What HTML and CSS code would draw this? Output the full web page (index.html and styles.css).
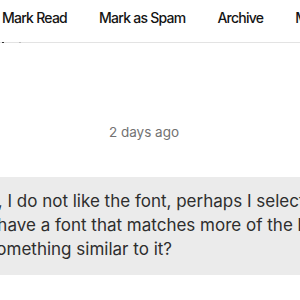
FILE: index.html
```html
<!DOCTYPE html>
<html>
<head>
<meta charset="utf-8">
<link rel="stylesheet" href="styles.css">
</head>
<body>
<nav class="toolbar">
  <span class="action">Mark Read</span>
  <span class="action">Mark as Spam</span>
  <span class="action">Archive</span>
  <span class="action">Move</span>
</nav>
<div class="residue"><span class="dot dark"></span><span class="dot light"></span></div>
<div class="timestamp">2 days ago</div>
<div class="bubble">
  <div class="line l1">Hi, I do not like the font, perhaps I selected the wrong one.</div>
  <div class="line l2">to have a font that matches more of the logo</div>
  <div class="line l3">or something similar to it?</div>
</div>
</body>
</html>
```
FILE: styles.css
```css
html, body {
  margin: 0;
  padding: 0;
  background: #ffffff;
  overflow: hidden;
}
body {
  width: 300px;
  height: 300px;
  font-family: "Inter", "Liberation Sans", sans-serif;
  color: #2b2b2b;
}
.toolbar {
  display: flex;
  gap: 32px;
  box-sizing: border-box;
  height: 43px;
  padding: 8px 0 0 2px;
  border-bottom: 1px solid #e3e3e3;
  white-space: nowrap;
  overflow: hidden;
}
.action {
  font-size: 14px;
  font-weight: 500;
  letter-spacing: -0.75px;
  line-height: 20px;
  color: #141414;
  flex: none;
}
.residue {
  display: flex;
  height: 2px;
  margin-top: -1px;
}
.dot {
  height: 1px;
  width: 2px;
}
.dark {
  background: #333;
  margin-left: 2px;
}
.light {
  background: #bbb;
  margin-left: 15px;
}
.timestamp {
  margin-top: 80px;
  padding-right: 12px;
  text-align: center;
  font-size: 13.5px;
  line-height: 16px;
  color: #727272;
}
.bubble {
  margin-top: 37px;
  background: #ebebeb;
  padding: 12px 0 14px 0;
  white-space: nowrap;
  overflow: hidden;
}
.line {
  font-size: 17px;
  line-height: 24px;
  color: #2e2e2e;
}
.l1 { margin-left: -19px; }
.l2 { margin-left: -23px; }
.l3 { margin-left: -34px; }
```
